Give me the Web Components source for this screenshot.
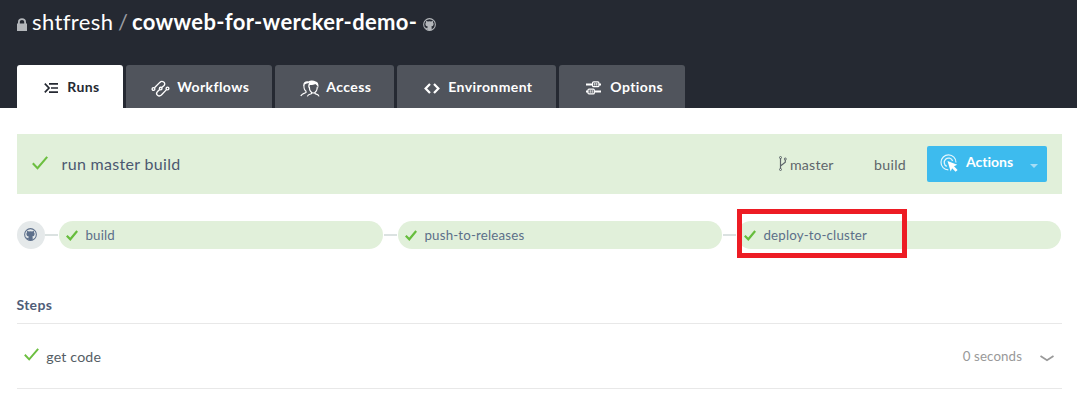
<!DOCTYPE html>
<html lang="en"><head><meta charset="utf-8"><title>Runs</title>
<style>
html,body{margin:0;background:#fff}
body{font-family:Lato,sans-serif;font-variant-ligatures:none;width:1077px;height:401px;overflow:hidden}
</style></head><body>
<run-page></run-page>
<script>
const GH='<circle cx="8" cy="8" r="7.2" fill="none" stroke="currentColor" stroke-width="1.3"/><path fill="currentColor" d="M3.9 3.3 6 4.2a7 7 0 0 1 4 0l2.1-.9.3 2.1c.7.8.8 1.7.6 2.7-.3 1.5-1.3 2.2-2.8 2.5.5.6.5 1 .5 1.8v2.7H5.4v-1.6c-1.4.3-1.8-.3-2.2-1.1l-.8-.7c1.2-.3 1.5 1 3 .8 0-.7.1-1.3.5-1.9C4.300 10.300 3.200 9.600 3 8.100c-.2-1 0-1.900.6-2.700z"/>';
const ICONS={
lock:['0 0 10 13','<path fill="currentColor" fill-rule="evenodd" d="M1 5.500V4C1 1.500 2.500.3 5 .3S9 1.500 9 4v1.500h1V13H0V5.500zm1.800 0h4.400V4C7.200 2.700 6.400 2 5 2S2.800 2.700 2.800 4z"/>'],
github:['0 0 16 16',GH],
runs:['0 0 15 12','<path fill="none" stroke="currentColor" stroke-width="1.700" d="M.8 1.600 5 6 .8 10.400M5 1.800h9M7 6h7M5 10.200h9"/>'],
flow:['0 0 18 17','<g fill="none" stroke="currentColor" stroke-width="1.350"><circle cx="2" cy="9" r="1.400"/><circle cx="9.200" cy="8.500" r="1.300"/><circle cx="16" cy="8.500" r="1.400"/><path d="M3 7.800 8.300 2.400C10.800 0 14.700 2.700 12.600 5.500L10.200 7.600M8.200 9.400 5.800 11.800C3.700 14.400 7.200 17.400 9.900 15L15 9.600"/></g>'],
users:['0 0 20 17','<path fill="currentColor" d="M3.400 6.200C2.600 2.500 5.600.5 8.400 1.400 10 .3 13.400-.2 15.700 1.400c2.800.7 3.200 4 2.500 6.400C17.600 6 16.500 4.800 15.300 4c-1.700 1-3.600 1.100-5.400 1L8.700 8C7.900 6.500 8.100 4.200 9.400 2.600 7.500 3.900 5.700 3.500 4.800 4.600z"/><path fill="none" stroke="currentColor" stroke-width="1.100" d="M4 5c-.3 2.800.5 5.200 2 6.300v1.200c-2.300.8-4.700 1.500-5.200 3.500M9.300 6.500c0 3 1 5 2.200 5.800v1.300c-2 .6-3.700 1-4.200 2.700M17.300 6.800c0 2.600-.9 4.600-2.200 5.500v1.300c2 .6 3.600 1.200 4 2.700M11.500 12.500q1.800 1 3.600 0"/>'],
code:['0 0 16 11','<path fill="none" stroke="currentColor" stroke-width="2.200" d="M6 1 1.600 5.500 6 10M10 1l4.400 4.500L10 10"/>'],
sliders:['0 0 15 14','<g fill="none" stroke="currentColor"><path stroke-width="1.800" d="M0 3.500h6.500M13 3.500h2M0 10.500h2M8.500 10.500H15"/><rect x="6.600" y=".9" width="6.300" height="4.800" rx="1" stroke-width="1.200"/><rect x="2" y="8.100" width="6.300" height="4.800" rx="1" stroke-width="1.200"/><path d="M8.800 2v2.600M10.800 2v2.600M4.200 9.200v2.600M6.200 9.200v2.600"/></g>'],
check:['0 0 16 14','<path fill="none" stroke="#6cbf40" stroke-width="2.100" d="M.8 7.300 5.500 12.200 15.200.9"/>'],
checkbold:['0 0 12 11','<path fill="none" stroke="#66bd3c" stroke-width="2.200" d="M.8 5.700 4.300 9.300 11.200 1"/>'],
branch:['0 0 8 15','<g fill="none" stroke="currentColor"><path stroke-width="1.200" d="M1.500 2v11M6.300 4v2.200L1.500 10"/><circle cx="1.500" cy="1.500" r="1"/><circle cx="6.300" cy="3" r="1"/><circle cx="1.500" cy="13.500" r="1"/></g>'],
target:['0 0 18 18','<g fill="none" stroke="#fff" stroke-opacity=".85"><path stroke-width="1.200" d="M8.300 15.900A7.500 7.500 0 1 1 16 8.500"/><path stroke-width="1.300" d="M6.800 12.300A4.300 4.300 0 1 1 12.600 7"/></g><path fill="#fff" d="m7.500 7 9.800 3.700-3.300 1.500 3.600 3.700-2 1.900-3.500-3.600-1.400 3.300z"/>'],
caret:['0 0 8 4','<path fill="#a6ddf5" d="M0 0h8L4 4z"/>'],
chevron:['0 0 14 7','<path fill="none" stroke="#999" stroke-width="1.700" d="M.5 1 7 5.300 13.500 1"/>']
};
function define(name,html,init){
 const t=document.createElement('template');t.innerHTML=html;
 customElements.define(name,class extends HTMLElement{
  constructor(){super();this.attachShadow({mode:'open'}).append(t.content.cloneNode(true))}
  connectedCallback(){if(init)init(this,this.shadowRoot)}
 });
}
define('ui-icon','<style>:host{display:block;flex:none;line-height:0}svg{display:block;width:100%;height:100%}</style><svg></svg>',(e,r)=>{
 const [box,body]=ICONS[e.getAttribute('name')],s=r.querySelector('svg');s.setAttribute('viewBox',box);s.innerHTML=body;
 e.style.width=e.getAttribute('w')+'px';e.style.height=e.getAttribute('h')+'px';
});
define('repo-title',`<style>:host{display:flex;height:65px;padding:0 17px;box-sizing:border-box;align-items:flex-start;color:#fff;font-size:22px;line-height:26px}
.lock{color:#b4b7bb;margin-top:18px}.t{display:flex;margin:9px 0 0 5px;white-space:pre}.o{width:81px;letter-spacing:.4px}.sl{width:19px;padding-left:5px;box-sizing:border-box;color:#9b9ea3}b{font-weight:700;letter-spacing:.34px}.gh{color:#b4b7bb;margin:18px 0 0 6px}</style>
<ui-icon class="lock" name="lock" w="10" h="13"></ui-icon><span class="t"><span class="o"><slot name="owner"></slot></span><span class="sl">/</span><b><slot name="repo"></slot></b></span><ui-icon class="gh" name="github" w="13" h="13"></ui-icon>`);
define('nav-tab',`<style>:host{display:flex;box-sizing:border-box;height:43px;border-radius:3px 3px 0 0;background:#50545c;color:#fff;font-weight:700;font-size:14px;line-height:18px;padding-left:27px}
:host([active]){background:#fff;color:#252932}.i{width:var(--iw);height:20px;display:flex;align-items:center;margin-top:13px}.t{margin:13px 0 0 .3px;white-space:nowrap;letter-spacing:.4px}</style><span class="i"><slot name="icon"></slot></span><span class="t"><slot></slot></span>`);
define('action-button',`<style>:host{display:flex;width:120px;height:36px;box-sizing:border-box;border-radius:2px;background:#3dbbee;color:#fff;font-size:14px;font-weight:700;line-height:18px;padding-left:13px}
.a{margin-top:8px}.t{margin:7px 0 0 8px;width:47px}.c{margin:18px 0 0 17px}</style><ui-icon class="a" name="target" w="18" h="18"></ui-icon><span class="t"><slot></slot></span><ui-icon class="c" name="caret" w="8" h="4"></ui-icon>`);
define('run-bar',`<style>:host{display:flex;height:60px;background:#e1f0da;box-sizing:border-box;padding:0 15px 0 15px;color:#4b5870;font-size:16px;line-height:20px}
.k{margin-top:22px}.n{margin:20px 0 0 13.500px;flex:1;letter-spacing:.32px}.b{margin-top:22px;color:#5e666b}.m{width:84px;margin:21px 0 0 3px;font-size:14.200px;letter-spacing:.18px;color:#5e666b}.u{width:53px;margin-top:21px;font-size:14.200px;letter-spacing:.3px;color:#5e666b}action-button{margin-top:12px}</style>
<ui-icon class="k" name="check" w="16" h="14"></ui-icon><span class="n"><slot></slot></span><ui-icon class="b" name="branch" w="8" h="15"></ui-icon><span class="m"><slot name="branch"></slot></span><span class="u"><slot name="type"></slot></span><action-button>Actions</action-button>`);
define('pipe-stage',`<style>:host{display:flex;width:324px;height:28px;box-sizing:border-box;border-radius:14px;background:#e1f0da;padding-left:7px;font-size:13.300px;line-height:18px;color:#5c6f89}
.i{margin-top:9px}.t{margin:5px 0 0 7.500px;white-space:nowrap;letter-spacing:.17px}</style><ui-icon class="i" name="checkbold" w="12" h="11"></ui-icon><span class="t"><slot></slot></span>`);
define('pipe-line',`<style>:host{display:flex;align-items:center;height:28px;position:relative}
.g{width:28px;height:28px;border-radius:50%;background:#e5e9ea;color:#5d6f8b;display:flex;align-items:center;justify-content:center}.g ui-icon{margin:0 1px 2px 0}.l{width:13px;height:2px;background:#dbe2e1;margin-right:1px}.gap{margin-left:1px}
.mark{position:absolute;left:720px;top:-12px;width:170px;height:49px;box-sizing:border-box;border:5px solid #ed1c24}</style>
<span class="g"><ui-icon name="github" w="13" h="13"></ui-icon></span><span class="l"></span><pipe-stage>build</pipe-stage><span class="l gap"></span><pipe-stage>push-to-releases</pipe-stage><span class="l gap"></span><pipe-stage>deploy-to-cluster</pipe-stage><span class="mark"></span>`);
define('step-row',`<style>:host{display:flex;height:66px;box-sizing:border-box;border-top:1px solid #e8e8e8;border-bottom:1px solid #e8e8e8;padding:0 8px 0 7px;color:#555e65;font-size:14.200px;line-height:18px}
.i{margin-top:24px}.t{margin:24px 0 0 7.300px;flex:1;letter-spacing:.16px}.d{margin:23px 18px 0 0;font-size:13.300px;letter-spacing:.1px;color:#999}.c{margin-top:31px}</style><ui-icon class="i" name="check" w="15" h="13"></ui-icon><span class="t"><slot></slot></span><span class="d"><slot name="time"></slot></span><ui-icon class="c" name="chevron" w="14" h="7"></ui-icon>`);
define('run-page',`<style>:host{display:block}header{background:#252932;height:108px}nav{display:flex;gap:3px;padding-left:17px}
main{padding:26px 15px 0 17px}pipe-line{margin-top:27px}h2{font-size:14px;line-height:18px;margin:47px 0 9px -.5px;color:#4f5d78;font-weight:700;letter-spacing:.3px}</style>
<header><repo-title><span slot="owner">shtfresh</span><span slot="repo">cowweb-for-wercker-demo-</span></repo-title>
<nav>
<nav-tab active style="width:106px;--iw:23px"><ui-icon slot="icon" name="runs" w="15" h="12"></ui-icon>Runs</nav-tab>
<nav-tab style="width:146px;--iw:26px;padding-left:25px"><ui-icon slot="icon" name="flow" w="19" h="17"></ui-icon>Workflows</nav-tab>
<nav-tab style="width:119px;--iw:26px;padding-left:25px"><ui-icon slot="icon" name="users" w="20" h="17"></ui-icon>Access</nav-tab>
<nav-tab style="width:159px;--iw:24px"><ui-icon slot="icon" name="code" w="16" h="11"></ui-icon>Environment</nav-tab>
<nav-tab style="width:126px;--iw:24px"><ui-icon slot="icon" name="sliders" w="15" h="14"></ui-icon>Options</nav-tab>
</nav></header>
<main><run-bar>run master build<span slot="branch">master</span><span slot="type">build</span></run-bar><pipe-line></pipe-line><h2>Steps</h2><step-row>get code<span slot="time">0 seconds</span></step-row></main>`);
</script></body></html>
